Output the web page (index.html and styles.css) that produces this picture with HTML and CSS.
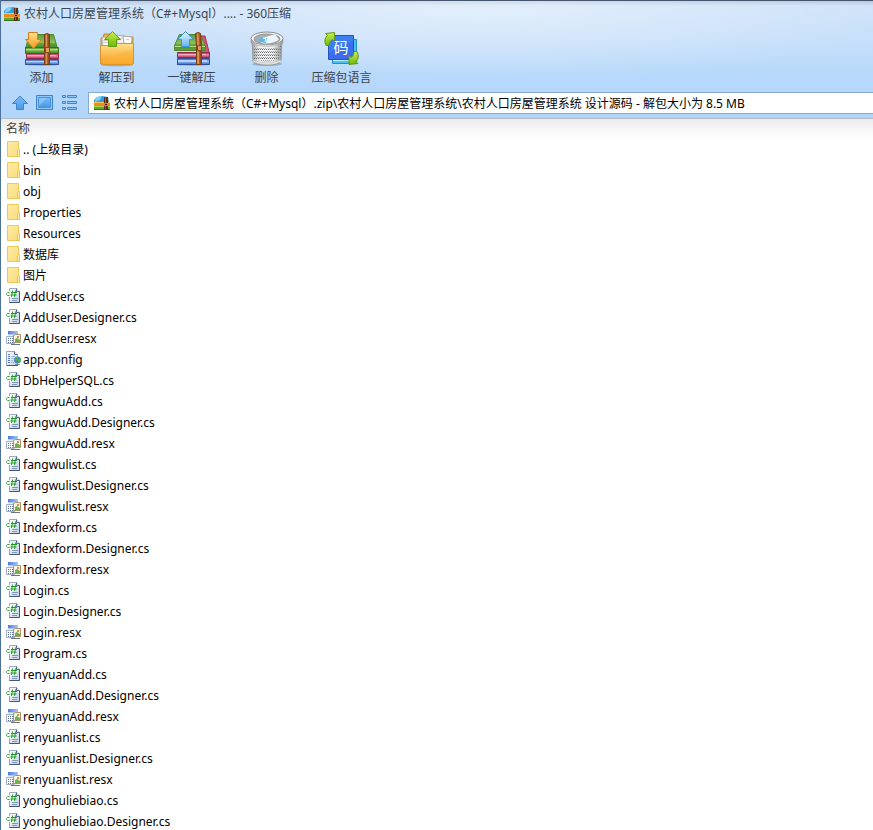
FILE: index.html
```html
<!DOCTYPE html>
<html lang="zh-CN">
<head>
<meta charset="utf-8">
<title>农村人口房屋管理系统 - 360压缩</title>
<link rel="stylesheet" href="styles.css">
</head>
<body>
<svg class="sprite" aria-hidden="true">
  <defs>
    <linearGradient id="green" x1="0" y1="0" x2="0" y2="1"><stop offset="0" stop-color="#5b9a3c"/><stop offset=".6" stop-color="#91c45b"/><stop offset=".62" stop-color="#62a63f"/><stop offset="1" stop-color="#3f8523"/></linearGradient>
    <linearGradient id="red" x1="0" y1="0" x2="0" y2="1"><stop offset="0" stop-color="#a82a4c"/><stop offset=".5" stop-color="#ec8ba6"/><stop offset="1" stop-color="#b52a54"/></linearGradient>
    <linearGradient id="blue" x1="0" y1="0" x2="0" y2="1"><stop offset="0" stop-color="#3a62b8"/><stop offset=".5" stop-color="#8fb5f2"/><stop offset="1" stop-color="#3c6ac4"/></linearGradient>
    <linearGradient id="strap" x1="0" y1="0" x2="1" y2="0"><stop offset="0" stop-color="#8a4616"/><stop offset=".35" stop-color="#d98c4b"/><stop offset=".6" stop-color="#b0622a"/><stop offset="1" stop-color="#7e3c12"/></linearGradient>
    <linearGradient id="orange" x1="0" y1="0" x2="0" y2="1"><stop offset="0" stop-color="#ffe08a"/><stop offset="1" stop-color="#f79a1c"/></linearGradient>
    <linearGradient id="lime" x1="0" y1="0" x2="0" y2="1"><stop offset="0" stop-color="#c9ee4e"/><stop offset="1" stop-color="#6eb80c"/></linearGradient>
    <linearGradient id="sky" x1="0" y1="0" x2="0" y2="1"><stop offset="0" stop-color="#e4f6ff"/><stop offset="1" stop-color="#64b4f8"/></linearGradient>
    <linearGradient id="nav" x1="0" y1="0" x2="0" y2="1"><stop offset="0" stop-color="#7bbcf7"/><stop offset="1" stop-color="#4a97e6"/></linearGradient>
    <linearGradient id="metal" x1="0" y1="0" x2="1" y2="0"><stop offset="0" stop-color="#9d9fa1"/><stop offset=".25" stop-color="#f4f4f4"/><stop offset=".7" stop-color="#f0f0f0"/><stop offset="1" stop-color="#959799"/></linearGradient>
    <linearGradient id="code" x1="0" y1="0" x2="0" y2="1"><stop offset="0" stop-color="#3b82f0"/><stop offset="1" stop-color="#4474f4"/></linearGradient>
    <linearGradient id="folder" x1="0" y1="0" x2="1" y2="1"><stop offset="0" stop-color="#ffeca5"/><stop offset="1" stop-color="#fadb7c"/></linearGradient>
    <linearGradient id="page" x1="0" y1="0" x2="1" y2="1"><stop offset="0" stop-color="#fff"/><stop offset="1" stop-color="#c3d0e6"/></linearGradient>
    <linearGradient id="bar" x1="0" y1="0" x2="1" y2="0"><stop offset="0" stop-color="#4a7be0"/><stop offset="1" stop-color="#a9c6f8"/></linearGradient>
    <pattern id="mesh" width="2" height="3" patternUnits="userSpaceOnUse"><rect width="1" height="1" fill="#66696c"/><rect x="1" y="2" width="1" height="1" fill="#9a9c9e"/></pattern>

    <symbol id="i-app" viewBox="0 0 16 14">
      <path d="M0 4 3 1l5-1 6 1 1 5v1H0z" fill="#2f9ee0"/><path d="M1 4 3 1l5-1-2 4-5 2z" fill="#7fd0f7"/>
      <path d="M0 6h16v4H0z" fill="#f08a1d"/><path d="M0 6h16v1H0z" fill="#ffc65c"/>
      <path d="M0 10h16v3H0z" fill="#5caa2c"/><path d="M0 10h16v1H0z" fill="#a6d54d"/><path d="M0 13h16v1H0z" fill="#39751c"/>
      <path d="M10 1h4v13h-4z" fill="#5b2b18"/><path d="M11 1h1v12h-1z" fill="#a0623c"/><path d="M10 7h4v3h-4z" fill="#cb854c"/><path d="M11 8h2v1h-2z" fill="#41200f"/>
    </symbol>

    <symbol id="i-add" viewBox="0 0 38 36">
      <ellipse cx="19" cy="33.500" rx="17" ry="1.500" fill="#6d8daf" opacity=".5"/>
      <path d="M6.500 3.500h24l4 14h-32z" fill="url(#green)" stroke="#4b8632"/>
      <path d="M2.500 16.500h33v6h-33z" fill="url(#green)" stroke="#35701c"/>
      <path d="M3 18h32v1H3z" fill="#add97a"/>
      <path d="M3.500 22.500h32v5h-32z" fill="url(#red)" stroke="#94284a"/><path d="M4 24h29v1H4z" fill="#f5a8bc"/>
      <path d="M2.500 28.500h33v5h-33z" fill="url(#blue)" stroke="#2f4f9a"/><path d="M3 30h31v1H3z" fill="#b5d3fb"/>
      <path d="M21.500 3.500q2.500-2 5 0v30h-5z" fill="url(#strap)" stroke="#7c3b10"/>
      <path d="M23.500 4v11M23.500 22v11" stroke="#d8965c" fill="none"/>
      <path d="M22.500 16.500h4v5h-4z" fill="#e0a261" stroke="#8a4a1c"/>
      <path d="M5.500 1.500h9v7h4l-8 9-8-9h3z" fill="url(#orange)" stroke="#cf8020"/>
    </symbol>

    <symbol id="i-extract" viewBox="0 0 38 36">
      <ellipse cx="19" cy="34" rx="16" ry="1.500" fill="#6d8daf" opacity=".5"/>
      <path d="M3 7h2l1-4h8l2 3h19v27H3z" fill="#f0b34c" stroke="#c08a2c"/>
      <path d="m4 7 10-2 2 11H5z" fill="#f6f6f4" stroke="#bbb"/>
      <path d="m19 4 12 2-1 12H19z" fill="#efefed" stroke="#aaa"/><path d="m25 5 9 1-1 12h-6z" fill="#fbfbfa" stroke="#aaa"/>
      <path d="M5 9.500h5M5 11.500h5M21 7.500h5M28 8.500h3" stroke="#ccc"/>
      <path d="M2.500 14.500h11l3-2h19v19q0 2-2 2h-29q-2 0-2-2z" fill="url(#orange)" stroke="#d8942a"/>
      <path d="M3 31q16-10 32-12v12q0 2-2 2H5z" fill="#fbb53a" opacity=".5"/>
      <path d="m14.500.500 8 8h-4v7h-8v-7h-4z" fill="url(#lime)" stroke="#5f9f12"/>
    </symbol>

    <symbol id="i-quick" viewBox="0 0 38 36">
      <ellipse cx="20" cy="33.500" rx="17" ry="1.500" fill="#6d8daf" opacity=".5"/>
      <path d="M28 5h4l4 16v5H25z" fill="#d8587a" stroke="#a03050"/>
      <path d="M4.500 21.500h32v5h-32z" fill="url(#red)" stroke="#94284a"/><path d="M5 23h28v1H5z" fill="#f7b0c2"/>
      <path d="M4.500 27.500h32v6h-32z" fill="url(#blue)" stroke="#2f4f9a"/><path d="M5 29h29v2H5z" fill="#b5d3fb"/>
      <path d="M6.500 3.500h21l5 12v4H1.500v-5z" fill="url(#green)" stroke="#4b8632"/>
      <path d="M2 15h30v1H2z" fill="#b7e088"/><path d="M2 17h30v2H2z" fill="#5c9e35"/>
      <path d="M22.500 2.500q2.500-2 5 0l1 12v19h-5v-18z" fill="url(#strap)" stroke="#7c3b10"/>
      <path d="m24.500 3 1 12M25.500 21v12" stroke="#d8965c"/><path d="M24.500 14.500h4v5h-4z" fill="#d8965a" stroke="#8a4a1c"/>
      <path d="m12.500.500 8 8h-4v7h-8v-7h-4z" fill="url(#sky)" stroke="#3f92d0"/>
    </symbol>

    <symbol id="i-bin" viewBox="0 0 34 36">
      <ellipse cx="17" cy="33" rx="15" ry="2" fill="#71879c" opacity=".5"/>
      <path d="M2 9h30l-1 21q-2 4-14 4T3 30z" fill="url(#metal)" stroke="#9a9c9e"/>
      <path d="M3 15q14 5 28 0l-1 13q-13 5-26 0z" fill="url(#mesh)"/>
      <path d="M3 29q14 6 28 0v2q-13 5-28 0z" fill="#eee" stroke="#aaa" stroke-width=".5"/>
      <ellipse cx="17" cy="7.500" rx="16" ry="6.500" fill="#f8f8f8" stroke="#8a8a8a"/>
      <ellipse cx="17" cy="8" rx="13" ry="5" fill="#a8b0b7" stroke="#909090"/>
      <path d="m11 9 2-2 12-4 4 6q-9 5-18 3z" fill="#eaf4fa"/><path d="m8 9 4-3 3 2 2-1-1 5q-5 0-8-3z" fill="#5fb6e8"/><path d="m13 7 3 1-1 3" fill="none" stroke="#fff"/>
      <path d="M1 8v4q15 7 32 0V8q-3 6-16 6T1 8z" fill="url(#metal)" stroke="#909090" stroke-width=".5"/>
    </symbol>

    <symbol id="i-lang" viewBox="0 0 36 36">
      <path d="M8.500 8.500h24v24h-24z" fill="#46c3f3" stroke="#258cd0"/><path d="M9 9h21v21H9z" fill="#b9eefe"/>
      <path d="M4.500 4.500h25v24h-25z" fill="url(#code)" stroke="#1f53bd"/>
      <path d="m5 22 24-12v18H5z" fill="#315cdf" opacity=".35"/>
      <text x="17" y="22" class="glyph">码</text>
      <path d="M2 14.500Q-1 8 3.500 4.500l-2-2 9-1v9l-2-2Q5 10 5.500 14.500z" fill="url(#lime)" stroke="#5f9912"/>
      <path d="M33 20.500q3 6-1 10l2 2-9 1v-9l2 2q3-1.500 3-6z" fill="url(#lime)" stroke="#5f9912"/>
    </symbol>

    <symbol id="i-up" viewBox="0 0 18 16"><path d="m9 1 7.500 7.500h-4v6h-7v-6h-4z" fill="url(#nav)" stroke="#3f84cc"/></symbol>
    <symbol id="i-view" viewBox="0 0 18 16"><path d="M.500.500h16v14H.500z" fill="#8fc8fb" stroke="#3c84cc"/><path d="M2.500 2.500h12v10h-12z" fill="url(#nav)" stroke="#4a92da"/><path d="M3 3h8l-8 8z" fill="#b7ddff" opacity=".4"/></symbol>
    <symbol id="i-list" viewBox="0 0 18 16"><path d="M1.500.500h3v2h-3zM1.500 6.500h3v2h-3zM1.500 12.500h3v2h-3zM6.500.500h9v2h-9zM6.500 6.500h9v2h-9zM6.500 12.500h9v2h-9z" fill="#8fc8fb" stroke="#3f88d0"/></symbol>

    <symbol id="i-folder" viewBox="0 0 16 16"><path d="M1.500.500h11v8h1v7h-12z" fill="url(#folder)" stroke="#edc95c"/><path d="M11.500 9.500l1-1 1 1v6h-2z" fill="#fff0b0" stroke="#e8c252"/></symbol>
    <symbol id="i-cs" viewBox="0 0 16 16">
      <path d="M3.500.500h7l3 3v11h-10z" fill="url(#page)" stroke="#98a6c0"/><path d="M13.500 3.500v11h-10" fill="none" stroke="#42567c"/><path d="M10.500.500v3h3" fill="#eef3fa" stroke="#54688e"/>
      <path d="M6 10.500h6M6 12.500h5" stroke="#8496b8"/><path d="M0 3h9v6H0z" fill="#fff" opacity=".85"/>
      <path d="M3.500 4.500h-2l-1 1v1l1 1h2" fill="none" stroke="#3aa640"/>
      <path d="M6.500 2.500 5.500 9M9.500 2.500 8.500 9M5 4.500h6M4.500 7h6" fill="none" stroke="#1f9a26"/>
    </symbol>
    <symbol id="i-resx" viewBox="0 0 16 16">
      <path d="M2 1h10v3H2z" fill="url(#bar)"/><path d="M2 4h10v4H2z" fill="#e3ebf8"/><path d="M2 4h10v1H2z" fill="#b7c9ea"/>
      <path d="M.500 6.500h8v7h-8z" fill="#fbfcfe" stroke="#a3afc6"/><path d="M2 8.500h5M2 10.500h5M2 12.500h5" stroke="#5d7096" stroke-dasharray="1 1"/>
      <path d="M7.500 5.500l2-1h5v8h-7z" fill="#fbf6e2" stroke="#a39767"/><path d="m9 11v-2l2-1 3 2v2H9z" fill="#6fb053"/><path d="M11 6h2v2h-2z" fill="#f08060"/><path d="M5 14.500h9" stroke="#6b7489"/>
    </symbol>
    <symbol id="i-config" viewBox="0 0 16 16">
      <path d="M.500.500h8l3 3v11H.500z" fill="url(#page)" stroke="#98a6c0"/><path d="M8.500.500v3h3" fill="#eef3fa" stroke="#54688e"/>
      <path d="M2 3.500h2M2 5.500h2M2 7.500h2M2 9.500h2M2 11.500h2" stroke="#5a7cc4"/><path d="M5 5.500h4M5 7.500h3M5 9.500h2M5 11.500h3" stroke="#a3b7da"/><path d="M1 14.500h11" stroke="#42567c"/>
      <circle cx="11.500" cy="9" r="3.500" fill="#3f88c8"/><path d="m9 7 2-1 1 2-2 2zM12 9l3-2v3l-3 2z" fill="#58b34c"/><path d="M9 13.500h5" stroke="#7b8a9e" fill="none"/>
    </symbol>
  </defs>
</svg>

<main class="window">
  <header class="chrome">
    <div class="titlebar">
      <svg class="app-icon" aria-hidden="true"><use href="#i-app"/></svg>
      <h1>农村人口房屋管理系统（C#+Mysql）.... - 360压缩</h1>
    </div>
    <nav class="toolbar">
      <button type="button"><svg aria-hidden="true"><use href="#i-add"/></svg>添加</button>
      <button type="button"><svg aria-hidden="true"><use href="#i-extract"/></svg>解压到</button>
      <button type="button"><svg aria-hidden="true"><use href="#i-quick"/></svg>一键解压</button>
      <button type="button"><svg aria-hidden="true"><use href="#i-bin"/></svg>删除</button>
      <button type="button"><svg aria-hidden="true"><use href="#i-lang"/></svg>压缩包语言</button>
    </nav>
    <div class="location">
      <button type="button" aria-label="向上"><svg aria-hidden="true"><use href="#i-up"/></svg></button>
      <button type="button" aria-label="图标"><svg aria-hidden="true"><use href="#i-view"/></svg></button>
      <button type="button" aria-label="列表"><svg aria-hidden="true"><use href="#i-list"/></svg></button>
      <label class="address">
        <svg class="app-icon" aria-hidden="true"><use href="#i-app"/></svg>
        <input type="text" aria-label="路径" value="农村人口房屋管理系统（C#+Mysql）.zip\农村人口房屋管理系统\农村人口房屋管理系统 设计源码 - 解包大小为 8.5 MB">
      </label>
    </div>
  </header>
  <section class="files">
    <table>
      <thead><tr><th scope="col">名称</th></tr></thead>
      <tbody>
        <tr><td><svg><use href="#i-folder"/></svg>.. (上级目录)</td></tr>
        <tr><td><svg><use href="#i-folder"/></svg>bin</td></tr>
        <tr><td><svg><use href="#i-folder"/></svg>obj</td></tr>
        <tr><td><svg><use href="#i-folder"/></svg>Properties</td></tr>
        <tr><td><svg><use href="#i-folder"/></svg>Resources</td></tr>
        <tr><td><svg><use href="#i-folder"/></svg>数据库</td></tr>
        <tr><td><svg><use href="#i-folder"/></svg>图片</td></tr>
        <tr><td><svg><use href="#i-cs"/></svg>AddUser.cs</td></tr>
        <tr><td><svg><use href="#i-cs"/></svg>AddUser.Designer.cs</td></tr>
        <tr><td><svg><use href="#i-resx"/></svg>AddUser.resx</td></tr>
        <tr><td><svg><use href="#i-config"/></svg>app.config</td></tr>
        <tr><td><svg><use href="#i-cs"/></svg>DbHelperSQL.cs</td></tr>
        <tr><td><svg><use href="#i-cs"/></svg>fangwuAdd.cs</td></tr>
        <tr><td><svg><use href="#i-cs"/></svg>fangwuAdd.Designer.cs</td></tr>
        <tr><td><svg><use href="#i-resx"/></svg>fangwuAdd.resx</td></tr>
        <tr><td><svg><use href="#i-cs"/></svg>fangwulist.cs</td></tr>
        <tr><td><svg><use href="#i-cs"/></svg>fangwulist.Designer.cs</td></tr>
        <tr><td><svg><use href="#i-resx"/></svg>fangwulist.resx</td></tr>
        <tr><td><svg><use href="#i-cs"/></svg>Indexform.cs</td></tr>
        <tr><td><svg><use href="#i-cs"/></svg>Indexform.Designer.cs</td></tr>
        <tr><td><svg><use href="#i-resx"/></svg>Indexform.resx</td></tr>
        <tr><td><svg><use href="#i-cs"/></svg>Login.cs</td></tr>
        <tr><td><svg><use href="#i-cs"/></svg>Login.Designer.cs</td></tr>
        <tr><td><svg><use href="#i-resx"/></svg>Login.resx</td></tr>
        <tr><td><svg><use href="#i-cs"/></svg>Program.cs</td></tr>
        <tr><td><svg><use href="#i-cs"/></svg>renyuanAdd.cs</td></tr>
        <tr><td><svg><use href="#i-cs"/></svg>renyuanAdd.Designer.cs</td></tr>
        <tr><td><svg><use href="#i-resx"/></svg>renyuanAdd.resx</td></tr>
        <tr><td><svg><use href="#i-cs"/></svg>renyuanlist.cs</td></tr>
        <tr><td><svg><use href="#i-cs"/></svg>renyuanlist.Designer.cs</td></tr>
        <tr><td><svg><use href="#i-resx"/></svg>renyuanlist.resx</td></tr>
        <tr><td><svg><use href="#i-cs"/></svg>yonghuliebiao.cs</td></tr>
        <tr><td><svg><use href="#i-cs"/></svg>yonghuliebiao.Designer.cs</td></tr>
      </tbody>
    </table>
  </section>
</main>
</body>
</html>
```
FILE: styles.css
```css
* { box-sizing: border-box; }

body {
  margin: 0;
  background: #fff;
  color: #000;
  font: 12px/20px "Noto Sans", "Noto Sans CJK SC", sans-serif;
}

button, input { font: inherit; }
svg { display: block; flex: none; }

.sprite { position: absolute; width: 0; height: 0; }
.glyph { font-size: 15px; text-anchor: middle; fill: #fff; }

.window {
  display: flex;
  flex-direction: column;
  height: 100vh;
  overflow: hidden;
  border-left: 1px solid #4d7196;
}

.chrome {
  flex: none;
  border-top: 1px solid #44566f;
  border-bottom: 1px solid #b4bac2;
  background:
    radial-gradient(ellipse 420px 70px at 55% 10px, #ffffff66, transparent),
    linear-gradient(#b9c8dc, #cfe3f9 5px, #c8e0fa 36px, #b8d9fa 72px, #b2d5fa);
}

.titlebar {
  display: flex;
  align-items: center;
  gap: 4px;
  height: 26px;
  padding-left: 3px;
}

.titlebar h1 {
  margin: 0;
  color: #3d4650;
  font-size: 12px;
  font-weight: 400;
}

.app-icon { width: 16px; height: 14px; }

.toolbar { display: flex; padding-left: 3px; }

.toolbar button {
  display: flex;
  flex-direction: column;
  align-items: center;
  gap: 1px;
  width: 75px;
  height: 63px;
  padding: 4px 0 0;
  border: 0;
  background: none;
  color: #3c4249;
  white-space: nowrap;
}

.toolbar svg { width: 38px; height: 36px; }

.location {
  display: flex;
  align-items: center;
  gap: 7px;
  height: 28px;
  padding: 0 0 2px 10px;
}

.location button { padding: 0; border: 0; background: none; }
.location button svg { width: 18px; height: 16px; }

.address {
  display: flex;
  flex: 1;
  align-items: center;
  gap: 4px;
  height: 22px;
  margin-left: 2px;
  padding-left: 5px;
  border: 1px solid #86a9d0;
  border-right: 0;
  background: #fff;
}

.address input {
  flex: 1;
  min-width: 0;
  height: 20px;
  padding: 1px 0 0;
  border: 0;
  outline: 0;
  background: none;
  color: #000;
}

.files {
  flex: 1;
  min-height: 0;
  overflow: hidden;
  background: linear-gradient(#ececec, #fff 20px);
}

.files table { width: 100%; border-collapse: collapse; }

.files th {
  height: 20px;
  padding: 0 5px;
  color: #404040;
  font-weight: 400;
  line-height: 20px;
  text-align: left;
}

.files td {
  display: flex;
  align-items: center;
  gap: 1px;
  height: 21px;
  padding: 0 5px 1px;
  line-height: 21px;
  white-space: nowrap;
}

.files td svg { width: 16px; height: 16px; }
```
